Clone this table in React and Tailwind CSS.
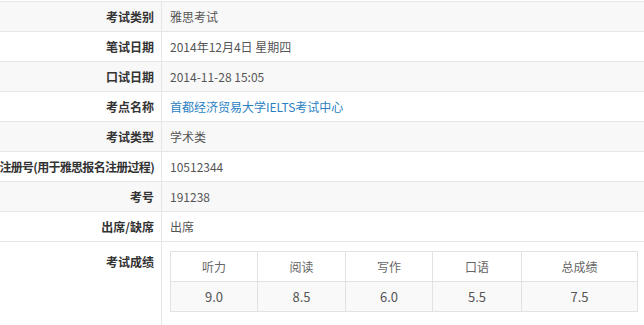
const rows = [
  { label: "考试类别", value: "雅思考试" },
  { label: "笔试日期", value: "2014年12月4日 星期四" },
  { label: "口试日期", value: "2014-11-28 15:05" },
  { label: "考点名称", value: "首都经济贸易大学IELTS考试中心", link: true },
  { label: "考试类型", value: "学术类" },
  { label: "注册号(用于雅思报名注册过程)", value: "10512344", tight: true },
  { label: "考号", value: "191238" },
  { label: "出席/缺席", value: "出席" },
];

const scores = [
  { name: "听力", score: "9.0", w: "w-[86px]" },
  { name: "阅读", score: "8.5", w: "w-[88px]" },
  { name: "写作", score: "6.0", w: "w-[87px]" },
  { name: "口语", score: "5.5", w: "w-[89px]" },
  { name: "总成绩", score: "7.5", w: "w-[116px]" },
];

export default function App() {
  return (
    <div
      className="w-[644px] h-[325px] overflow-hidden bg-white pt-[1px] text-[12px] text-[#555]"
      style={{ fontFamily: '"Segoe UI", "Noto Sans CJK SC", "Liberation Sans", sans-serif' }}
    >
      <div className="border-t border-[#e8e8e8]">
        {rows.map((r, i) => (
          <div
            key={r.label}
            className={`flex h-[30px] border-b border-[#e6e6e6] ${i % 2 === 0 ? "bg-[#f8f8f8]" : "bg-white"}`}
          >
            <div
              className={`w-[162px] shrink-0 flex items-center justify-end pr-[7px] whitespace-nowrap font-bold text-[#333] border-r border-[#e6e6e6] ${r.tight ? "tracking-[-0.7px]" : ""}`}
            >
              {r.label}
            </div>
            <div className={`flex items-center pl-[8px] ${r.link ? "text-[#2b7fc3]" : "text-[#555]"}`}>
              {r.value}
            </div>
          </div>
        ))}

        <div className="flex h-[90px]">
          <div className="w-[162px] shrink-0 flex justify-end pr-[7px] pt-[11px] font-bold text-[#333] border-r border-[#e6e6e6]">
            考试成绩
          </div>
          <div className="pl-[8px] pt-[9px]">
            <div className="flex border border-[#e2e2e2]">
              {scores.map((s, i) => (
                <div key={s.name} className={`${s.w} flex flex-col ${i > 0 ? "border-l border-[#e2e2e2]" : ""}`}>
                  <div className="h-[30px] flex items-center justify-center bg-white text-[#666] border-b border-[#e2e2e2]">
                    {s.name}
                  </div>
                  <div className="h-[29px] flex items-center justify-center bg-[#f9f9f9] text-[#555] text-[13px]">
                    {s.score}
                  </div>
                </div>
              ))}
            </div>
          </div>
        </div>
      </div>
    </div>
  );
}
